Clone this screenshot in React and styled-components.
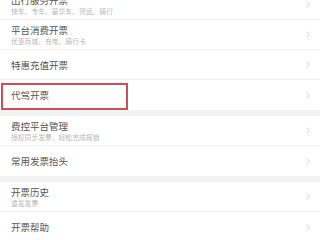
import styled, { createGlobalStyle } from "styled-components";

const Global = createGlobalStyle`
  html, body { margin: 0; padding: 0; background: #f3f3f3; }
  body { font-family: "Noto Sans CJK SC", "Noto Sans", sans-serif; overflow: hidden; }
`;

/* ── Styles ── */
const Page = styled.div`
  width: 100%; height: 100vh; overflow: hidden; background: #f3f3f3;
`;
const Scroll = styled.div`
  margin-top: -10px; display: flex; flex-direction: column; gap: 6px;
`;
const Group = styled.div`background: #fff; display: flex; flex-direction: column;`;
const Row = styled.div`
  position: relative; height: 30px; box-sizing: border-box;
  display: flex; align-items: center; justify-content: space-between;
  padding: 0 10px 0 11px;
  border-bottom: ${({ $last }) => ($last ? "none" : "1px solid #f0f0f0")};
`;
const Texts = styled.div`display: flex; flex-direction: column; gap: 1px;`;
const Title = styled.div`
  font-size: 9.5px; line-height: 12px; color: #555; white-space: nowrap;
`;
const Sub = styled.div`
  font-size: 6.8px; line-height: 8px; color: #b8b8b8; white-space: nowrap;
`;
const Highlight = styled.div`
  position: absolute; left: 1px; top: 3px; width: 127px; height: 27px;
  box-sizing: border-box; border: 2px solid rgb(205, 78, 88); pointer-events: none;
`;

const Chevron = () => (
  <svg width="4" height="7" viewBox="0 0 4 7" fill="none" stroke="#c8c8c8" strokeWidth="0.8">
    <polyline points="0.6 0.6 3.2 3.5 0.6 6.4" />
  </svg>
);

const GROUPS = [
  [
    { title: "出行服务开票", sub: "快车、专车、豪华车、货运、骑行" },
    { title: "平台消费开票", sub: "优惠商城、充电、骑行卡" },
    { title: "特惠充值开票" },
    { title: "代驾开票", mark: true },
  ],
  [
    { title: "费控平台管理", sub: "授权同步发票，轻松完成报销" },
    { title: "常用发票抬头" },
  ],
  [
    { title: "开票历史", sub: "重发发票" },
    { title: "开票帮助" },
  ],
];

export default function App() {
  return (
    <Page>
      <Global />
      <Scroll>
        {GROUPS.map((rows, g) => (
          <Group key={g}>
            {rows.map((r, i) => (
              <Row key={r.title} $last={i === rows.length - 1}>
                <Texts>
                  <Title>{r.title}</Title>
                  {r.sub && <Sub>{r.sub}</Sub>}
                </Texts>
                <Chevron />
                {r.mark && <Highlight />}
              </Row>
            ))}
          </Group>
        ))}
      </Scroll>
    </Page>
  );
}
